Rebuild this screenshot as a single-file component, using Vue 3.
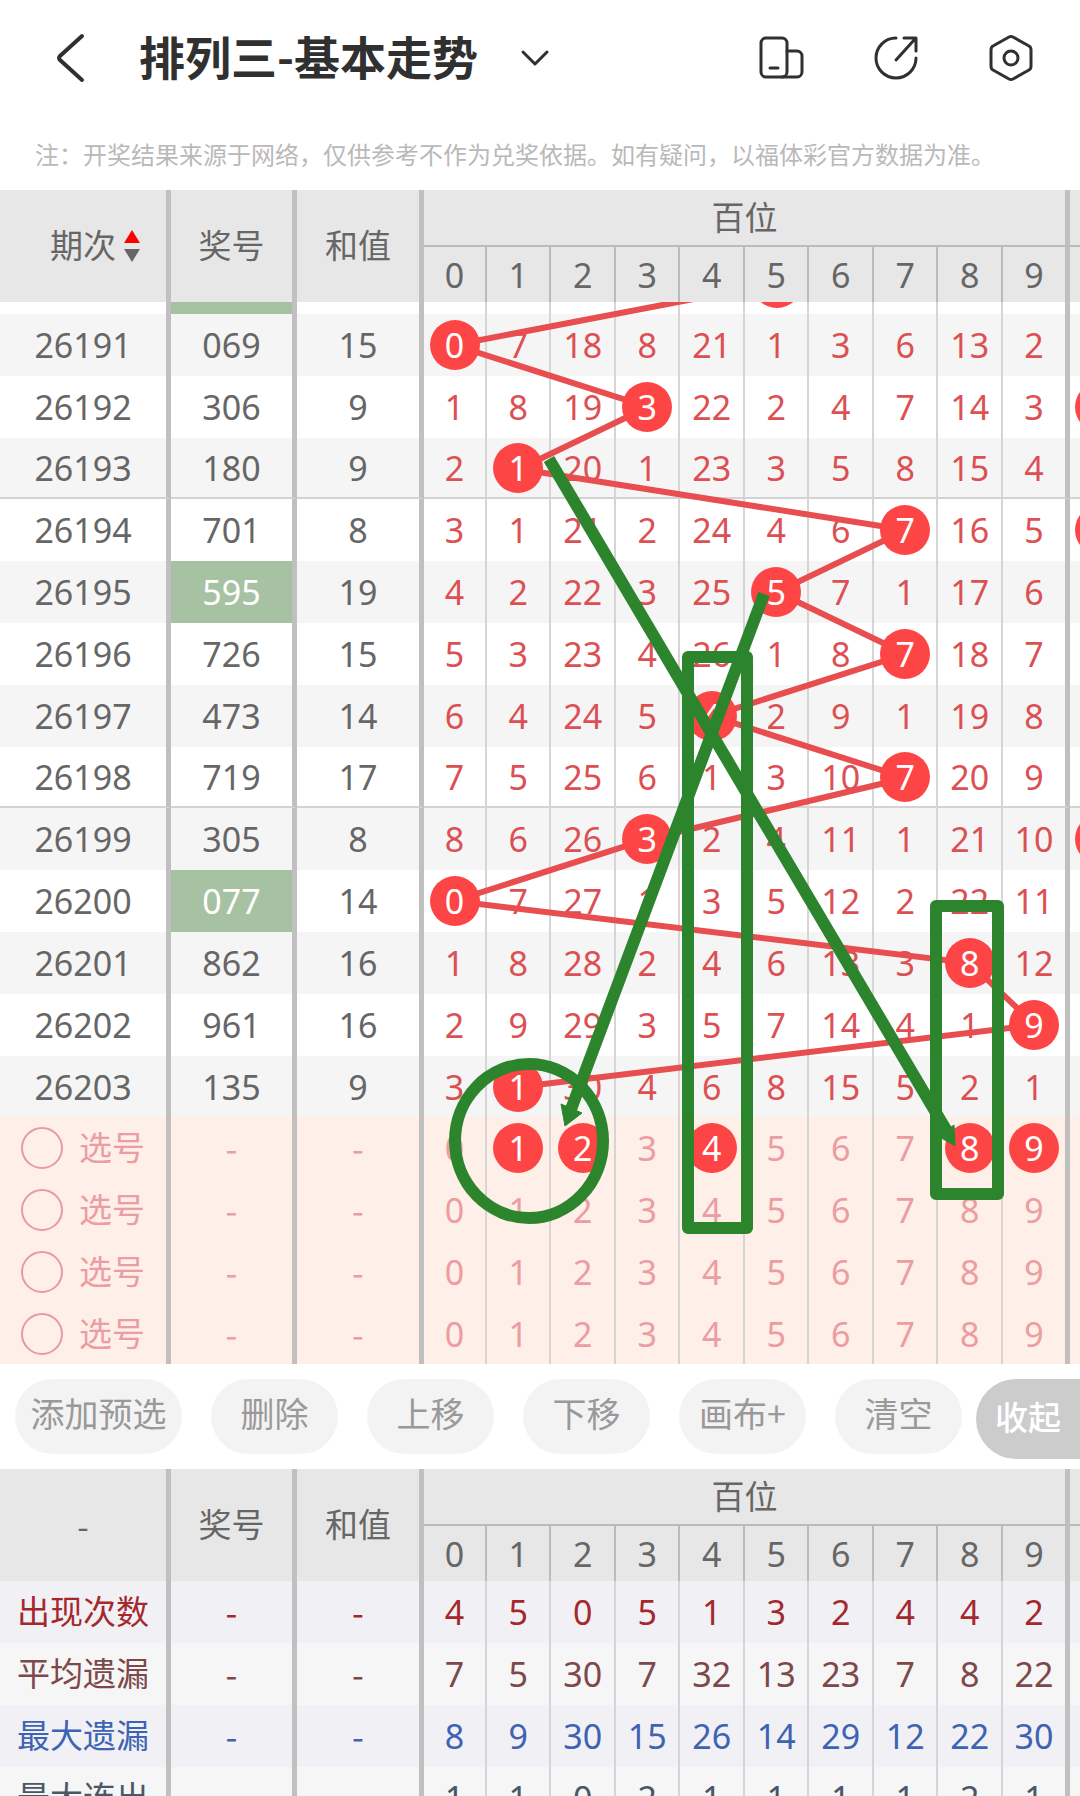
<script setup>
import { computed, ref } from 'vue'

const digits = [0, 1, 2, 3, 4, 5, 6, 7, 8, 9]

const draws = [
  { id: '26191', code: '069', sum: 15, hit: 0, cells: [0, 7, 18, 8, 21, 1, 3, 6, 13, 2] },
  { id: '26192', code: '306', sum: 9, hit: 3, cells: [1, 8, 19, 3, 22, 2, 4, 7, 14, 3] },
  { id: '26193', code: '180', sum: 9, hit: 1, cells: [2, 1, 20, 1, 23, 3, 5, 8, 15, 4] },
  { id: '26194', code: '701', sum: 8, hit: 7, cells: [3, 1, 21, 2, 24, 4, 6, 7, 16, 5] },
  { id: '26195', code: '595', sum: 19, hit: 5, pair: true, cells: [4, 2, 22, 3, 25, 5, 7, 1, 17, 6] },
  { id: '26196', code: '726', sum: 15, hit: 7, cells: [5, 3, 23, 4, 26, 1, 8, 7, 18, 7] },
  { id: '26197', code: '473', sum: 14, hit: 4, cells: [6, 4, 24, 5, 4, 2, 9, 1, 19, 8] },
  { id: '26198', code: '719', sum: 17, hit: 7, cells: [7, 5, 25, 6, 1, 3, 10, 7, 20, 9] },
  { id: '26199', code: '305', sum: 8, hit: 3, cells: [8, 6, 26, 3, 2, 4, 11, 1, 21, 10] },
  { id: '26200', code: '077', sum: 14, hit: 0, pair: true, cells: [0, 7, 27, 1, 3, 5, 12, 2, 22, 11] },
  { id: '26201', code: '862', sum: 16, hit: 8, cells: [1, 8, 28, 2, 4, 6, 13, 3, 8, 12] },
  { id: '26202', code: '961', sum: 16, hit: 9, cells: [2, 9, 29, 3, 5, 7, 14, 4, 1, 9] },
  { id: '26203', code: '135', sum: 9, hit: 1, cells: [3, 1, 30, 4, 6, 8, 15, 5, 2, 1] }
]

const picks = ref([[1, 2, 4, 8, 9], [], [], []])
const activePick = ref(null)

const stats = [
  { name: '出现次数', tone: 'count', cells: [4, 5, 0, 5, 1, 3, 2, 4, 4, 2] },
  { name: '平均遗漏', tone: 'average', cells: [7, 5, 30, 7, 32, 13, 23, 7, 8, 22] },
  { name: '最大遗漏', tone: 'longest', cells: [8, 9, 30, 15, 26, 14, 29, 12, 22, 30] },
  { name: '最大连出', tone: 'streak', cells: [1, 1, 0, 2, 1, 1, 1, 1, 2, 1] }
]

const actions = ['添加预选', '删除', '上移', '下移', '画布+', '清空']

const endsGroup = (i) => i % 5 === 2

/* Row centres, measured from the top of the visible part of the list. */
const PEEK = 12
const centers = computed(() => {
  let top = PEEK
  return draws.map((d, i) => {
    const h = endsGroup(i) ? 61 : 62
    const c = top + 31
    top += h
    return c
  })
})
const colX = (n) => Math.round(454 + n * 64.5)
const trend = computed(() =>
  [`${colX(5)},-19`, ...draws.map((d, i) => `${colX(d.hit)},${centers.value[i]}`)].join(' ')
)
const nextColumnHits = [1, 3, 8]
</script>

<template>
  <div class="page">
    <header class="bar">
      <button class="icon back" type="button" aria-label="返回">
        <svg width="32" height="52" viewBox="0 0 32 52"><path d="M27 4 5 24q-2 2 0 4l22 20" /></svg>
      </button>
      <h1>排列三-基本走势</h1>
      <button class="icon more" type="button" aria-label="切换走势">
        <svg width="30" height="20" viewBox="0 0 30 20"><path d="M3 4 15 16 27 4" /></svg>
      </button>
      <nav class="tools">
        <button class="icon" type="button" aria-label="横竖屏">
          <svg width="48" height="48" viewBox="0 0 48 48">
            <rect x="4" y="4" width="26" height="39" rx="5" />
            <path d="M30 17h10a5 5 0 0 1 5 5v16a5 5 0 0 1-5 5H25M13 34h8" />
          </svg>
        </button>
        <button class="icon" type="button" aria-label="分享">
          <svg width="48" height="48" viewBox="0 0 48 48">
            <path d="M24 4A20 20 0 1 0 44 24M24 26 43 5M32 4H44V17" />
          </svg>
        </button>
        <button class="icon" type="button" aria-label="设置">
          <svg width="48" height="52" viewBox="0 0 48 52">
            <path d="M22 5q2-1 4 0L42 14q2 1 2 4V34q0 3-2 4L26 47q-2 1-4 0L6 38q-2-1-2-4V18q0-3 2-4Z" />
            <circle cx="24" cy="26" r="7" />
          </svg>
        </button>
      </nav>
    </header>

    <p class="note">注：开奖结果来源于网络，仅供参考不作为兑奖依据。如有疑问，以福体彩官方数据为准。</p>

    <section class="chart">
      <table>
        <colgroup>
          <col class="w-id" /><col class="w-code" /><col class="w-sum" /><col class="w-first" />
          <col v-for="n in 8" :key="n" /><col class="w-last" /><col class="w-next" />
        </colgroup>
        <thead>
          <tr class="h-top">
            <th rowspan="2" class="thick"><span class="sort">期次<i class="up"></i><i class="down"></i></span></th>
            <th rowspan="2" class="thick">奖号</th>
            <th rowspan="2" class="thick">和值</th>
            <th colspan="10" class="thick under">百位</th>
            <th class="under"></th>
          </tr>
          <tr class="h-num">
            <th v-for="n in digits" :key="n" class="num" :class="n === 9 ? 'thick' : 'thin'">{{ n }}</th>
            <th></th>
          </tr>
        </thead>
        <tbody>
          <tr class="peek">
            <td class="thick"></td>
            <td class="thick pair"></td>
            <td class="thick"></td>
            <td v-for="n in digits" :key="n" :class="n === 9 ? 'thick' : 'thin'"></td>
            <td></td>
          </tr>
          <tr v-for="(d, i) in draws" :key="d.id" class="draw" :class="{ odd: i % 2 === 0, short: endsGroup(i), rule: endsGroup(i) && i < 12 }">
            <td class="thick">{{ d.id }}</td>
            <td class="thick" :class="{ pair: d.pair }">{{ d.code }}</td>
            <td class="thick">{{ d.sum }}</td>
            <td v-for="(c, n) in d.cells" :key="n" class="miss" :class="n === 9 ? 'thick' : 'thin'">
              <span v-if="n === d.hit" class="ball">{{ n }}</span>
              <template v-else>{{ c }}</template>
            </td>
            <td></td>
          </tr>
          <tr v-for="(p, i) in picks" :key="'p' + i" class="pick" :class="{ short: i === 3 }">
            <td class="thick">
              <label class="choose"><input v-model="activePick" type="radio" name="pick" :value="i" />选号</label>
            </td>
            <td class="thick dash">-</td>
            <td class="thick dash">-</td>
            <td v-for="n in digits" :key="n" :class="n === 9 ? 'thick' : 'thin'">
              <span v-if="p.includes(n)" class="ball">{{ n }}</span>
              <template v-else>{{ n }}</template>
            </td>
            <td></td>
          </tr>
        </tbody>
      </table>

      <svg class="layer trend" viewBox="0 0 1080 1062" preserveAspectRatio="none" aria-hidden="true">
        <polyline :points="trend" />
        <circle :cx="colX(5)" cy="-19" r="25" />
        <circle v-for="r in nextColumnHits" :key="r" cx="1100" :cy="centers[r]" r="25" />
      </svg>
      <svg class="layer canvas" viewBox="0 0 1080 1062" preserveAspectRatio="none" aria-hidden="true">
        <path d="M549 157 948 831M764 292 570 810" />
        <rect x="688" y="355" width="59" height="571" />
        <rect x="936" y="604" width="62" height="288" />
        <ellipse cx="529" cy="839" rx="74" ry="77" />
        <path class="tip" d="M955 844 938 834 954 823ZM565 824 561 802 582 811Z" />
      </svg>
    </section>

    <div class="actions">
      <div class="list">
        <button v-for="a in actions" :key="a" type="button" :class="{ long: a.length > 3 }">{{ a }}</button>
      </div>
      <button type="button" class="collapse">收起</button>
    </div>

    <section class="summary">
      <table>
        <colgroup>
          <col class="w-id" /><col class="w-code" /><col class="w-sum" /><col class="w-first" />
          <col v-for="n in 8" :key="n" /><col class="w-last" /><col class="w-next" />
        </colgroup>
        <thead>
          <tr class="h-top">
            <th rowspan="2" class="thick dash">-</th>
            <th rowspan="2" class="thick">奖号</th>
            <th rowspan="2" class="thick">和值</th>
            <th colspan="10" class="thick under">百位</th>
            <th class="under"></th>
          </tr>
          <tr class="h-num">
            <th v-for="n in digits" :key="n" class="num" :class="n === 9 ? 'thick' : 'thin'">{{ n }}</th>
            <th></th>
          </tr>
        </thead>
        <tbody>
          <tr v-for="s in stats" :key="s.name" class="stat" :class="s.tone">
            <th scope="row" class="thick">{{ s.name }}</th>
            <td class="thick dash">-</td>
            <td class="thick dash">-</td>
            <td v-for="(c, n) in s.cells" :key="n" :class="n === 9 ? 'thick' : 'thin'">{{ c }}</td>
            <td></td>
          </tr>
        </tbody>
      </table>
    </section>
  </div>
</template>

<style>
body {
  background: #fff;
}
</style>

<style scoped>
.page {
  display: flex;
  flex-direction: column;
  height: 100vh;
  overflow: hidden;
  background: #fff;
  color: #666;
  font-family: "Noto Sans", "Noto Sans CJK SC", sans-serif;
}
.page > * {
  flex: none;
}
button {
  margin: 0;
  padding: 0;
  border: 0;
  background: none;
  font: inherit;
  color: inherit;
}
.bar {
  display: flex;
  align-items: center;
  height: 116px;
  padding: 0 45px 0 55px;
  color: #303030;
}
.bar h1 {
  margin: 0 0 0 52px;
  padding-bottom: 6px;
  font: 700 46px/60px "Noto Sans CJK SC", sans-serif;
}
.icon {
  display: flex;
}
.icon svg {
  fill: none;
  stroke: currentColor;
  stroke-width: 3;
  stroke-linecap: round;
  stroke-linejoin: round;
}
.icon.back svg {
  stroke-width: 4;
}
.more {
  margin-left: 42px;
}
.tools {
  display: flex;
  align-items: center;
  gap: 67px;
  margin-left: auto;
}
.note {
  height: 74px;
  margin: 0;
  padding-left: 35px;
  color: #b9b9b9;
  font: 24px/76px "Noto Sans CJK SC", sans-serif;
  white-space: nowrap;
}
.chart {
  position: relative;
}
table {
  width: 100%;
  table-layout: fixed;
  border-collapse: separate;
  border-spacing: 0;
  font-size: 34px;
  line-height: 50px;
  text-align: center;
}
th,
td {
  padding: 0;
  font-weight: 400;
}
.w-id { width: 171px; }
.w-code { width: 126px; }
.w-sum { width: 127px; }
.w-first { width: 63px; }
.w-last { width: 67px; }
.w-next { width: 10px; }
thead th {
  background: #e7e7e7;
  font-size: 33px;
}
thead .num {
  font-size: 34px;
}
.h-top { height: 57px; }
.h-num { height: 55px; }
.thick {
  border-right: 5px solid #c0c0c0;
}
.thin {
  border-right: 2px solid #d5d5d5;
}
thead .thin {
  border-right-color: #bbb;
}
.under {
  border-bottom: 2px solid #bbb;
}
.dash {
  font-family: "Noto Sans CJK SC", sans-serif;
}
.sort {
  position: relative;
}
.sort i {
  position: absolute;
  left: 74px;
  border: 8px solid transparent;
}
.sort .up {
  top: 7px;
  border-top: 0;
  border-bottom: 13px solid #f00;
}
.sort .down {
  top: 26px;
  border-bottom: 0;
  border-top: 13px solid #666;
}
.peek { height: 12px; }
.draw,
.pick,
.stat { height: 62px; }
.short { height: 61px; }
.odd { background: #f5f5f5; }
.rule td {
  border-bottom: 2px solid #d3d3d3;
}
.pair {
  background: #a6c2a3;
  color: #fff;
}
.miss { color: #dc5053; }
.pick {
  background: #feefe8;
  color: #eb9da2;
}
.ball {
  position: relative;
  z-index: 2;
  display: block;
  width: 50px;
  height: 50px;
  margin: 0 auto;
  border-radius: 50%;
  background: #fd4546;
  color: #fff;
}
.choose {
  display: flex;
  align-items: center;
  gap: 16px;
  padding-left: 21px;
  font-size: 33px;
  white-space: nowrap;
}
.choose input {
  appearance: none;
  width: 42px;
  height: 42px;
  margin: 0;
  border: 2px solid #e79aa1;
  border-radius: 50%;
}
.choose input:checked {
  background: #e79aa1;
}
.layer {
  position: absolute;
  top: 112px;
  left: 0;
  width: 100%;
  height: calc(100% - 112px);
  overflow: hidden;
  pointer-events: none;
}
.trend {
  z-index: 1;
}
.trend polyline {
  fill: none;
  stroke: #e84e4f;
  stroke-width: 6;
}
.trend circle {
  fill: #fd4546;
}
.canvas {
  z-index: 3;
  fill: none;
  stroke: #2c842c;
  stroke-width: 12;
  stroke-linejoin: round;
}
.canvas .tip {
  fill: #2c842c;
  stroke-width: 1;
}
.actions {
  display: flex;
  align-items: flex-start;
  height: 90px;
  padding-top: 15px;
}
.list {
  display: flex;
  flex: 1;
  gap: 29px;
  min-width: 0;
  padding-left: 15px;
  overflow: hidden;
}
.list button {
  flex: none;
  width: 127px;
  height: 75px;
  padding-bottom: 8px;
  border-radius: 38px;
  background: #f3f3f3;
  color: #999;
  font: 34px/50px "Noto Sans CJK SC", sans-serif;
}
.list .long {
  width: 167px;
}
.collapse {
  width: 104px;
  height: 80px;
  padding-bottom: 6px;
  border-radius: 40px 0 0 40px;
  background: #ccc;
  color: #fff;
  font: 500 33px/50px "Noto Sans CJK SC", sans-serif;
}
.stat { background: #f6f6f6; }
.stat th { font-size: 33px; }
.count { background: #f1f1f5; color: #a5282d; }
.average { color: #7d484a; }
.longest { background: #f1f1f5; color: #3e63b3; }
.streak { color: #4b5666; }
</style>
